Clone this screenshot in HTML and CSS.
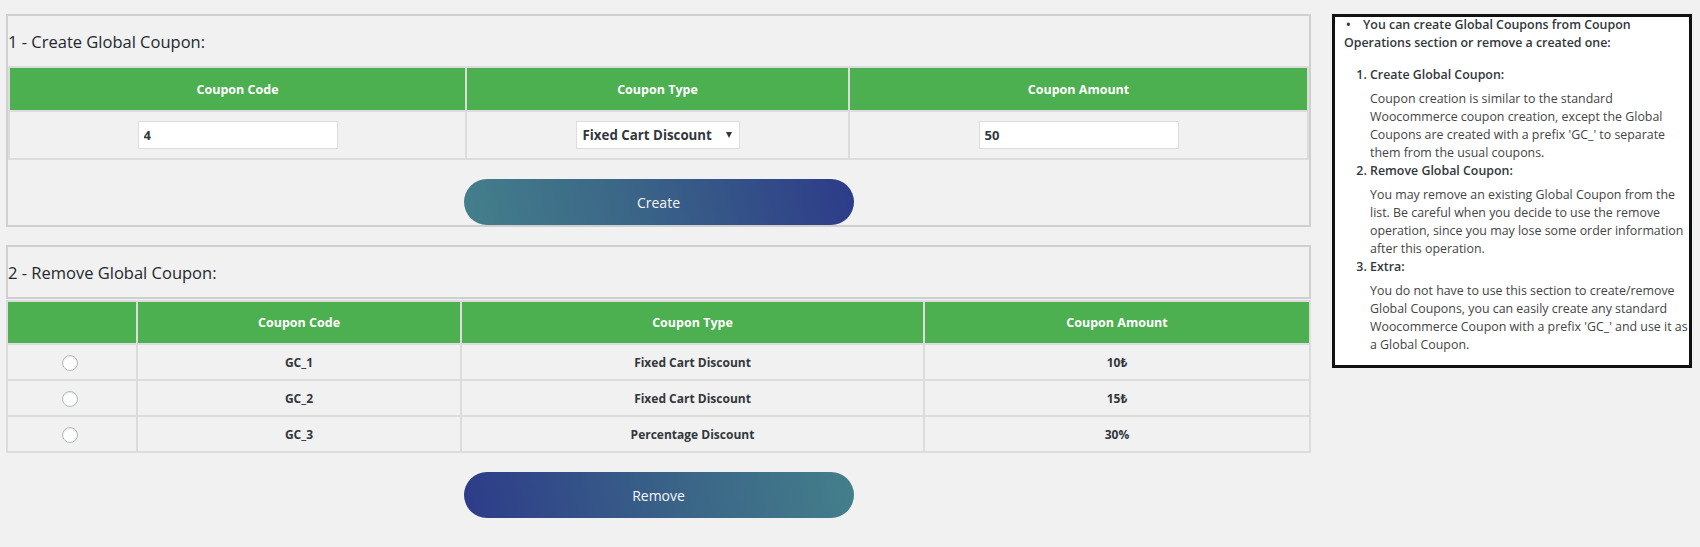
FILE: index.html
```html
<!DOCTYPE html>
<html lang="en">
<head>
<meta charset="utf-8">
<title>Global Coupons</title>
<link rel="stylesheet" href="styles.css">
</head>
<body>
<div class="page">
  <div class="main">
    <section class="card">
      <div class="card-title">1 - Create Global Coupon:</div>
      <table class="t1">
        <thead>
          <tr>
            <th class="t1-c1">Coupon Code</th>
            <th class="t1-c2">Coupon Type</th>
            <th class="t1-c3">Coupon Amount</th>
          </tr>
        </thead>
        <tbody>
          <tr>
            <td><input class="field" type="text" value="4"></td>
            <td>
              <span class="select">
                <select><option>Fixed Cart Discount</option><option>Percentage Discount</option></select>
              </span>
            </td>
            <td><input class="field" type="text" value="50"></td>
          </tr>
        </tbody>
      </table>
      <button class="btn btn-create" type="button">Create</button>
    </section>

    <section class="remove">
      <div class="card-title boxed">2 - Remove Global Coupon:</div>
      <table class="t2">
        <thead>
          <tr>
            <th class="t2-c1"></th>
            <th class="t2-c2">Coupon Code</th>
            <th class="t2-c3">Coupon Type</th>
            <th class="t2-c4">Coupon Amount</th>
          </tr>
        </thead>
        <tbody>
          <tr>
            <td><input class="radio" type="radio" name="gc"></td>
            <td>GC_1</td>
            <td>Fixed Cart Discount</td>
            <td>10₺</td>
          </tr>
          <tr>
            <td><input class="radio" type="radio" name="gc"></td>
            <td>GC_2</td>
            <td>Fixed Cart Discount</td>
            <td>15₺</td>
          </tr>
          <tr>
            <td><input class="radio" type="radio" name="gc"></td>
            <td>GC_3</td>
            <td>Percentage Discount</td>
            <td>30%</td>
          </tr>
        </tbody>
      </table>
      <button class="btn btn-remove" type="button">Remove</button>
    </section>
  </div>

  <aside class="help">
    <p class="intro"><span class="bullet">•</span>You can create Global Coupons from Coupon<br>Operations section or remove a created one:</p>
    <ol class="steps">
      <li>Create Global Coupon:
        <p>Coupon creation is similar to the standard<br>Woocommerce coupon creation, except the Global<br>Coupons are created with a prefix 'GC_' to separate<br>them from the usual coupons.</p>
      </li>
      <li>Remove Global Coupon:
        <p>You may remove an existing Global Coupon from the<br>list. Be careful when you decide to use the remove<br>operation, since you may lose some order information<br>after this operation.</p>
      </li>
      <li>Extra:
        <p>You do not have to use this section to create/remove<br>Global Coupons, you can easily create any standard<br>Woocommerce Coupon with a prefix 'GC_' and use it as<br>a Global Coupon.</p>
      </li>
    </ol>
  </aside>
</div>
</body>
</html>
```

FILE: styles.css
```css
* { box-sizing: border-box; }

body {
  margin: 0;
  background: #f1f1f1;
  font-family: "Open Sans", "Noto Sans", "DejaVu Sans", sans-serif;
  color: #32373c;
}

.page {
  display: flex;
  align-items: flex-start;
  gap: 21px;
  padding: 14px 0 0 6px;
}

.main { width: 1305px; }

.card { border: 2px solid #cfcfcf; }

.card-title {
  height: 50px;
  display: flex;
  align-items: center;
  font-size: 16.5px;
  color: #23282d;
}

.card-title.boxed {
  height: 54px;
  border: 2px solid #cfcfcf;
}

.remove { margin-top: 18px; }

table {
  width: 100%;
  table-layout: fixed;
  border-collapse: separate;
  border-spacing: 0;
  border-top: 2px solid #dcdcdc;
  border-left: 2px solid #dcdcdc;
}

th, td {
  padding: 0;
  text-align: center;
  border-right: 2px solid #dcdcdc;
  border-bottom: 2px solid #dcdcdc;
}

th {
  background: #4caf50;
  color: #fff;
  font-weight: 700;
  font-size: 12.5px;
}

.t1 th { height: 44px; }
.t1 td { height: 48px; }
.t1-c1 { width: 457px; }
.t1-c2 { width: 383px; }

.t2 { margin-top: 1px; }
.t2 th { height: 43px; }
.t2 td { height: 36px; font-size: 12px; font-weight: 700; color: #32373c; }
.t2-c1 { width: 130px; }
.t2-c2 { width: 324px; }
.t2-c3 { width: 463px; }

.field {
  width: 200px;
  height: 28px;
  margin: 0;
  padding: 0 5px;
  border: 1px solid #dddddd;
  background: #fff;
  font-family: inherit;
  font-size: 13px;
  font-weight: 700;
  color: #32373c;
  vertical-align: middle;
}

.select {
  position: relative;
  display: inline-block;
  width: 164px;
  height: 28px;
  border: 1px solid #dddddd;
  background: #fff;
  vertical-align: middle;
}

.select select {
  appearance: none;
  -webkit-appearance: none;
  width: 100%;
  height: 100%;
  margin: 0;
  padding: 0 0 0 6px;
  border: 0;
  background: transparent;
  font-family: inherit;
  font-size: 13.3px;
  font-weight: 700;
  color: #32373c;
  outline: none;
}

.select::after {
  content: "";
  position: absolute;
  right: 7px;
  top: 10px;
  border-left: 3.5px solid transparent;
  border-right: 3.5px solid transparent;
  border-top: 6px solid #32373c;
  pointer-events: none;
}

.radio {
  -webkit-appearance: none;
  appearance: none;
  width: 16px;
  height: 16px;
  margin: 0 4px 0 0;
  border: 1px solid #b4b9be;
  border-radius: 50%;
  background: #fff;
  box-shadow: inset 0 1px 2px rgba(0, 0, 0, 0.1);
  vertical-align: middle;
}

.btn {
  display: block;
  width: 390px;
  height: 46px;
  margin: 19px auto 0;
  border: 0;
  border-radius: 23px;
  color: #f4f6f8;
  font-family: inherit;
  font-size: 14px;
  cursor: pointer;
}

.btn-create { background: linear-gradient(78deg, #447f8b 0%, #3a6487 45%, #2d3b89 100%); }
.btn-remove { background: linear-gradient(78deg, #2d3b89 0%, #3a6487 55%, #447f8b 100%); }

.help {
  width: 360px;
  border: 3px solid #111;
  background: #fff;
  padding: 0 3px 11px 9px;
  font-size: 12.4px;
  line-height: 18px;
  color: #444;
}

.help p { margin: 0; white-space: nowrap; }

.intro {
  margin-top: -1px !important;
  font-weight: 600;
  color: #32373c;
}

.bullet {
  display: inline-block;
  width: 19px;
  padding-left: 2px;
}

.steps {
  margin: 14px 0 0;
  padding-left: 26px;
  font-weight: 600;
  color: #32373c;
}

.steps p {
  margin-top: 6px;
  font-weight: 400;
  color: #444;
}
```
